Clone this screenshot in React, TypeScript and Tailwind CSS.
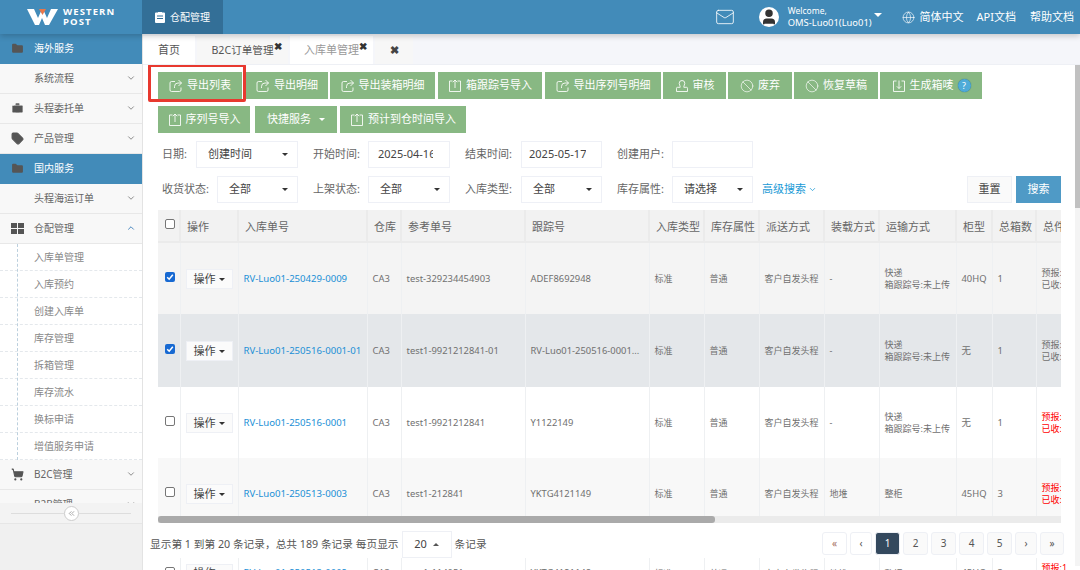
import React from "react";
import { ChevronDown, ChevronUp, Folder, Briefcase, Tag, ShoppingCart, ChevronsLeft, Ban, Mail, Globe, User } from "lucide-react";

const font = { fontFamily: '"Noto Sans","Noto Sans CJK SC",sans-serif' };

function SideHead({ icon, label, blue, active, open, arrow = true }: { icon?: React.ReactNode; label: string; blue?: boolean; active?: boolean; open?: boolean; arrow?: boolean }) {
  return (
    <div className={`flex h-[30px] items-center border-b pb-[1px] ${blue ? "bg-[#428bb9] border-[#428bb9] text-white" : "bg-[#f8f8f8] border-[#e8e8e8] text-[#666]"} ${active ? "text-[#2a72b5]" : ""}`}>
      <span className="flex w-[34px] justify-center text-[#555]">{icon}</span>
      <span className="text-[10px] leading-none">{label}</span>
      {arrow && !blue && (
        <span className="ml-auto mr-[6px]">
          {open ? <ChevronUp size={10} className="text-[#2a72b5]" /> : <ChevronDown size={10} className="text-[#777]" />}
        </span>
      )}
    </div>
  );
}

function SubItem({ label }: { label: string }) {
  return (
    <div className="flex h-[27px] items-center border-b border-dashed border-[#e4e8ec] pl-[34px] text-[10px] text-[#888]">
      {label}
    </div>
  );
}

function GridIcon() {
  return (
    <svg width="13" height="11" viewBox="0 0 13 11" fill="#555">
      <rect x="0" y="0" width="6" height="5" />
      <rect x="7" y="0" width="6" height="5" />
      <rect x="0" y="6" width="6" height="5" />
      <rect x="7" y="6" width="6" height="5" />
    </svg>
  );
}

function Sidebar() {
  return (
    <aside className="relative flex w-[143px] shrink-0 flex-col overflow-hidden border-r border-[#e3e3e3] bg-[#f0f0f0]">
      <div className="h-[469px] shrink-0 overflow-hidden bg-white">
        <SideHead blue label="海外服务" icon={<Folder size={13} fill="#555" strokeWidth={0} />} />
        <SideHead label="系统流程" />
        <SideHead label="头程委托单" icon={<Briefcase size={13} fill="#555" color="#f8f8f8" strokeWidth={1} />} />
        <SideHead label="产品管理" icon={<Tag size={13} fill="#555" color="#555" />} />
        <SideHead blue label="国内服务" icon={<Folder size={13} fill="#555" strokeWidth={0} />} />
        <SideHead label="头程海运订单" />
        <SideHead active open label="仓配管理" icon={<GridIcon />} />
        <div className="relative">
          <div className="absolute bottom-0 left-[17px] top-0 border-l border-dashed border-[#bcd0de]" />
          {["入库单管理", "入库预约", "创建入库单", "库存管理", "拆箱管理", "库存流水", "换标申请", "增值服务申请"].map((s) => (
            <SubItem key={s} label={s} />
          ))}
        </div>
        <SideHead label="B2C管理" icon={<ShoppingCart size={13} fill="#555" color="#555" />} />
        <SideHead label="B2B管理" />
      </div>
      <div className="flex h-[20px] shrink-0 items-center bg-[#f3f3f3] px-[11px]">
        <div className="h-px flex-1 bg-[#ddd]" />
        <span className="flex h-[15px] w-[15px] items-center justify-center rounded-full border border-[#ccc] bg-white text-[#888]">
          <ChevronsLeft size={9} />
        </span>
        <div className="h-px flex-1 bg-[#ddd]" />
      </div>
      <div className="flex-1 border-t border-[#e6e6e6] bg-[#f0f0f0]" />
    </aside>
  );
}

function Logo() {
  return (
    <div className="flex w-[142px] shrink-0 items-center pl-[27px]">
      <svg width="31" height="18" viewBox="0 0 31 18">
        <path d="M0 1h7l4 9 4-9h1l4 9 4-9h7l-9 16h-4l-3-7-3 7h-4z" fill="#fff" />
        <path d="M12 1h7l-3.5 6z" fill="#e8774a" />
      </svg>
      <div className="ml-[5px] text-[9.5px] font-bold tracking-[1.1px] text-white" style={{ fontFamily: '"Open Sans",sans-serif' }}>
        <div className="h-[10px] leading-[10px]">WESTERN</div>
        <div className="h-[10px] leading-[10px]">POST</div>
      </div>
    </div>
  );
}

function Header() {
  return (
    <header className="relative z-10 flex h-[34px] shrink-0 items-center bg-[#428bb9] text-white shadow-[0_2px_6px_rgba(0,0,0,0.2)]">
      <Logo />
      <div className="flex h-full w-[81px] items-center justify-center gap-[5px] bg-[#336f97] text-[10px]">
        <svg width="10" height="12" viewBox="0 0 10 12">
          <path d="M1 1.5h2V1h4v.5h2a1 1 0 0 1 1 1V11a1 1 0 0 1-1 1H1a1 1 0 0 1-1-1V2.5a1 1 0 0 1 1-1z" fill="#fff" />
          <path d="M2 5h6M2 7.5h6" stroke="#336f97" strokeWidth="1" />
        </svg>
        仓配管理
      </div>
      <div className="ml-auto flex items-center text-[11px]">
        <Mail size={20} strokeWidth={1} className="mr-[24px]" />
        <span className="mr-[9px] flex h-[20px] w-[20px] items-center justify-center overflow-hidden rounded-full bg-white">
          <User size={18} fill="#333" color="#333" />
        </span>
        <div className="mr-[2px] text-[9.4px] leading-[12px]">
          <div className="text-[8.5px]">Welcome,</div>
          <div>OMS-Luo01(Luo01)</div>
        </div>
        <span className="mb-[4px] mr-[20px] h-0 w-0 border-x-[4px] border-t-[4px] border-x-transparent border-t-white" />
        <Globe size={13} strokeWidth={1.2} className="mr-[5px]" />
        <span className="mr-[13px]">简体中文</span>
        <span className="mr-[14px]">API文档</span>
        <span className="mr-[6px]">帮助文档</span>
      </div>
    </header>
  );
}

function Tabs() {
  const X = <span className="absolute right-[6px] top-[5px] text-[10px] font-bold leading-none text-[#333]">✖</span>;
  return (
    <div className="flex h-[31px] shrink-0 items-end gap-[2px] border-b border-[#eef0f5] bg-[#f5f6fa] text-[11px] text-[#555]">
      <div className="flex h-[28px] w-[52px] items-center justify-center bg-white pt-[1px]">首页</div>
      <div className="relative flex h-[28px] w-[91px] items-center justify-center bg-[#f7f7f7] pt-[1px] text-[10.6px]">B2C订单管理{X}</div>
      <div className="relative flex h-[28px] w-[83px] items-center justify-center bg-white pt-[1px] text-[#999]">入库单管理{X}</div>
      <div className="relative flex h-[28px] w-[38px] items-center justify-center bg-[#f7f7f7] pt-[1px] text-[11px] font-bold text-[#444]">✖</div>
    </div>
  );
}

function Btn({ icon, children, w, cls = "" }: { icon?: React.ReactNode; children: React.ReactNode; w: number; cls?: string }) {
  return (
    <button style={{ width: w }} className={`flex h-[27px] shrink-0 items-center justify-center gap-[4px] bg-[#88b883] text-[11px] text-white ${cls}`}>
      {icon}
      {children}
    </button>
  );
}

const svgProps = { width: 14, height: 14, viewBox: "0 0 14 14", fill: "none", stroke: "rgba(255,255,255,0.85)", strokeWidth: 1 };

function ShareIc() {
  return (
    <svg {...svgProps}>
      <path d="M12 8.5V11a1.5 1.5 0 0 1-1.5 1.5h-8A1.5 1.5 0 0 1 1 11V4a1.5 1.5 0 0 1 1.5-1.5H6" />
      <path d="M9.5 1 12.5 4 9.5 7" />
      <path d="M12.5 4H9a3.5 3.5 0 0 0-3.5 3.5V9" />
    </svg>
  );
}
function UploadIc() {
  return (
    <svg {...svgProps}>
      <path d="M4.5 2H1.5v10.5h11V2h-3" />
      <path d="M7 1v8M4.8 3.2 7 1l2.2 2.2" />
    </svg>
  );
}
function DownloadIc() {
  return (
    <svg {...svgProps}>
      <path d="M4.5 2H1.5v10.5h11V2h-3" />
      <path d="M7 1.5v8M4.8 7.3 7 9.5l2.2-2.2" />
    </svg>
  );
}
function StampIc() {
  return (
    <svg {...svgProps}>
      <path d="M7 1.5a2.8 2.8 0 0 0-2.8 2.8c0 1.5 1 2 1 3.5v.5H2.5a1 1 0 0 0-1 1V12.5h11V9.3a1 1 0 0 0-1-1H8.8v-.5c0-1.5 1-2 1-3.5A2.8 2.8 0 0 0 7 1.5z" />
    </svg>
  );
}
const banIc = <Ban size={14} strokeWidth={1.25} color="rgba(255,255,255,0.9)" />;

function Toolbar() {
  return (
    <div className="relative">
      <div className="flex h-[27px]">
        <Btn w={84} icon={<ShareIc />}>导出列表</Btn>
        <Btn w={82} cls="ml-[4px]" icon={<ShareIc />}>导出明细</Btn>
        <Btn w={105} cls="ml-[2px]" icon={<ShareIc />}>导出装箱明细</Btn>
        <Btn w={104} cls="ml-[3px]" icon={<UploadIc />}>箱跟踪号导入</Btn>
        <Btn w={116} cls="ml-[3px]" icon={<ShareIc />}>导出序列号明细</Btn>
        <Btn w={63} cls="ml-[2px]" icon={<StampIc />}>审核</Btn>
        <Btn w={64} cls="ml-[2px]" icon={banIc}>废弃</Btn>
        <Btn w={84} cls="ml-[2px]" icon={banIc}>恢复草稿</Btn>
        <Btn w={102} cls="ml-[2px]" icon={<DownloadIc />}>
          生成箱唛
          <span className="flex h-[13px] w-[13px] items-center justify-center rounded-full bg-[#4fabd8] text-[9px] leading-none text-white shadow-[0_0_1px_#1b5f86]">?</span>
        </Btn>
      </div>
      <div className="mt-[7px] flex h-[27px]">
        <Btn w={92} icon={<UploadIc />}>序列号导入</Btn>
        <Btn w={82} cls="ml-[5px]">
          快捷服务
          <span className="ml-[4px] h-0 w-0 border-x-[3px] border-t-[3px] border-x-transparent border-t-white" />
        </Btn>
        <Btn w={126} cls="ml-[3px]" icon={<UploadIc />}>预计到仓时间导入</Btn>
      </div>
      <div className="pointer-events-none absolute left-[-10px] top-[-8px] h-[38px] w-[98px] rounded-[2px] border-[3px] border-[#e8392f]" />
    </div>
  );
}

function Field({ label, w, lw, pl, value, select, inner = "pl-[11px] pr-[9px]" }: { label: string; w: number; lw: number; pl: number; value?: string; select?: boolean; inner?: string }) {
  return (
    <div className="flex items-center">
      <span style={{ width: lw, paddingLeft: pl }} className="shrink-0 whitespace-nowrap text-[11px] text-[#666]">{label}</span>
      <div style={{ width: w }} className={`flex h-[27px] items-center justify-between border border-[#eef0f6] bg-white text-[11px] text-[#444] ${inner}`}>
        <span className="overflow-hidden whitespace-nowrap">{value}</span>
        {select && <span className="h-0 w-0 shrink-0 border-x-[3px] border-t-[3px] border-x-transparent border-t-[#333]" />}
      </div>
    </div>
  );
}

function Filters() {
  return (
    <div className="mt-[8px] text-[11px]">
      <div className="flex h-[27px]">
        <Field label="日期:" lw={38} pl={4} w={102} value="创建时间" select />
        <Field label="开始时间:" lw={70} pl={15} w={82} value="2025-04-16" inner="pl-[9px] pr-[16px]" />
        <Field label="结束时间:" lw={71} pl={15} w={81} value="2025-05-17" inner="pl-[7px] pr-[12px]" />
        <Field label="创建用户:" lw={70} pl={15} w={81} />
      </div>
      <div className="mt-[8px] flex h-[27px] items-center">
        <Field label="收货状态:" lw={59} pl={4} w={81} value="全部" select />
        <Field label="上架状态:" lw={70} pl={15} w={82} value="全部" select />
        <Field label="入库类型:" lw={71} pl={15} w={81} value="全部" select />
        <Field label="库存属性:" lw={70} pl={15} w={81} value="请选择" select />
        <span className="ml-[9px] flex items-center gap-[2px] text-[11px] text-[#1a9ad6]">高级搜索<ChevronDown size={9} /></span>
        <button className="ml-auto h-[27px] w-[45px] border border-[#eef0f5] bg-[#fafafa] text-[11px] text-[#444]">重置</button>
        <button className="ml-[4px] h-[27px] w-[45px] bg-[#4f9ac6] text-[11px] text-white">搜索</button>
      </div>
    </div>
  );
}

const cols = [22, 58, 129, 34, 124, 124, 55, 55, 65, 55, 77, 36, 44, 46];
const heads = ["", "操作", "入库单号", "仓库", "参考单号", "跟踪号", "入库类型", "库存属性", "派送方式", "装载方式", "运输方式", "柜型", "总箱数", "总件数"];
const tableWidth = cols.reduce((a, b) => a + b, 0);

type Row = { checked: boolean; no: string; ref: string; track: string; load: string; ship: string[]; box: string; count: string; red?: boolean; bg: string; h: number };
const rows: Row[] = [
  { checked: true, no: "RV-Luo01-250429-0009", ref: "test-329234454903", track: "ADEF8692948", load: "-", ship: ["快递", "箱跟踪号:未上传"], box: "40HQ", count: "1", bg: "bg-[#f4f4f4]", h: 72 },
  { checked: true, no: "RV-Luo01-250516-0001-01", ref: "test1-9921212841-01", track: "RV-Luo01-250516-0001...", load: "-", ship: ["快递", "箱跟踪号:未上传"], box: "无", count: "1", bg: "bg-[#e4e7ea]", h: 73 },
  { checked: false, no: "RV-Luo01-250516-0001", ref: "test1-9921212841", track: "Y1122149", load: "-", ship: ["快递", "箱跟踪号:未上传"], box: "无", count: "1", red: true, bg: "bg-white", h: 71 },
  { checked: false, no: "RV-Luo01-250513-0003", ref: "test1-212841", track: "YKTG4121149", load: "地堆", ship: ["整柜"], box: "45HQ", count: "3", red: true, bg: "bg-[#f8f8f8]", h: 71 },
  { checked: false, no: "RV-Luo01-250513-0002", ref: "test1-114051", track: "YKTG4121148", load: "地堆", ship: ["整柜"], box: "45HQ", count: "3", red: true, bg: "bg-white", h: 71 },
];

function CheckBox({ on }: { on: boolean }) {
  return on ? (
    <span className="ml-[7px] flex h-[10px] w-[10px] items-center justify-center rounded-[2px] bg-[#1769d2]">
      <svg width="8" height="8" viewBox="0 0 8 8"><path d="M1.2 4.2 3.2 6.2 6.8 1.8" stroke="#fff" strokeWidth="1.5" fill="none" /></svg>
    </span>
  ) : (
    <span className="ml-[7px] block h-[10px] w-[10px] rounded-[2px] border border-[#767676] bg-white" />
  );
}

const td = "border-r border-[#eef0f2] px-[5px] pt-[1px] align-middle whitespace-nowrap overflow-hidden";

function Cells({ r }: { r: Row }) {
  return (
    <>
      <td className={`${td} !px-0`}><span className="mb-[4px] block"><CheckBox on={r.checked} /></span></td>
      <td className={td}>
        <span className="flex h-[20px] w-[47px] items-center justify-center gap-[3px] border border-[#eef0f5] bg-[#fbfbfb] text-[11px] text-[#444]">
          操作<span className="h-0 w-0 border-x-[3px] border-t-[3px] border-x-transparent border-t-[#333]" />
        </span>
      </td>
      <td className={`${td} text-[9.6px] text-[#1a8fd6]`}>{r.no}</td>
      <td className={`${td} text-[9.4px]`}>CA3</td>
      <td className={`${td} text-[9.4px]`}>{r.ref}</td>
      <td className={`${td} text-[9.4px]`}>{r.track}</td>
      <td className={td}>标准</td>
      <td className={td}>普通</td>
      <td className={td}>客户自发头程</td>
      <td className={td}>{r.load}</td>
      <td className={`${td} leading-[12px]`}>{r.ship.map((s) => <div key={s}>{s}</div>)}</td>
      <td className={`${td} text-[9.4px]`}>{r.box}</td>
      <td className={`${td} text-[9.4px]`}>{r.count}</td>
      <td className={`${td} leading-[12px] ${r.red ? "text-[#f00]" : ""}`}><div>预报:1</div><div>已收:0</div></td>
    </>
  );
}

function Colgroup() {
  return <colgroup>{cols.map((c, i) => <col key={i} style={{ width: c }} />)}</colgroup>;
}

function DataTable() {
  return (
    <div className="relative mt-[7px] h-[313px] overflow-hidden">
      <table className="table-fixed border-collapse" style={{ width: tableWidth }}>
        <Colgroup />
        <thead>
          <tr className="h-[32px] bg-[#f2f2f2] text-[11px] text-[#666]">
            {heads.map((h, i) => (
              <th key={i} className={`h-[32px] overflow-hidden whitespace-nowrap border-b-2 border-r-2 border-[#ebebeb] py-0 text-left font-normal leading-none ${i === 0 ? "px-0" : "px-[6px] pt-[2px]"}`}>
                {i === 0 ? <span className="mb-[4px] block"><CheckBox on={false} /></span> : h}
              </th>
            ))}
          </tr>
        </thead>
        <tbody className="text-[9px] text-[#707070]">
          {rows.slice(0, 4).map((r) => (
            <tr key={r.no} style={{ height: r.h }} className={r.bg}>
              <Cells r={r} />
            </tr>
          ))}
        </tbody>
      </table>
      <div className="absolute bottom-0 left-0 right-0 h-[7px] bg-[#ebebeb]">
        <div className="h-full w-[557px] rounded-[3px] bg-[#aaaaaa]" />
      </div>
    </div>
  );
}

function Pager() {
  const base = "flex h-[23px] items-center justify-center rounded-[3px] border border-[#eef0f5] text-[10px] text-[#555]";
  return (
    <div className="ml-[-8px] mt-[8px] flex h-[27px] items-center text-[10.7px] text-[#555]">
      <span>显示第 1 到第 20 条记录，总共 189 条记录 每页显示</span>
      <span className="mx-[3px] flex h-[27px] w-[50px] items-center justify-center gap-[6px] border border-[#eef0f5] text-[11px] text-[#444]">
        20<span className="h-0 w-0 border-x-[3px] border-b-[3px] border-x-transparent border-b-[#555]" />
      </span>
      <span>条记录</span>
      <div className="mb-[2px] ml-auto mr-[-3px] flex gap-[3px]">
        <span className={`${base} w-[25px] border-[#e6e6e6] text-[#a5705f]`}>«</span>
        <span className={`${base} w-[22px]`}>‹</span>
        <span className={`${base} w-[25px] border-[#34495e] bg-[#34495e] text-white`}>1</span>
        {["2", "3", "4", "5"].map((n) => <span key={n} className={`${base} w-[25px] bg-[#fafafa]`}>{n}</span>)}
        <span className={`${base} w-[22px] bg-[#fafafa]`}>›</span>
        <span className={`${base} w-[24px] bg-[#fafafa]`}>»</span>
      </div>
    </div>
  );
}

function HiddenRow() {
  return (
    <table className="table-fixed border-collapse" style={{ width: tableWidth }}>
      <Colgroup />
      <tbody className="text-[9px] text-[#707070]">
        <tr className="h-[30px] bg-white"><Cells r={rows[4]} /></tr>
      </tbody>
    </table>
  );
}

export default function App() {
  return (
    <div style={font} className="flex h-[570px] w-[1080px] flex-col overflow-hidden bg-white">
      <Header />
      <div className="flex min-h-0 flex-1">
        <Sidebar />
        <main className="flex min-w-0 flex-1 flex-col">
          <Tabs />
          <div className="flex min-h-0 flex-1 overflow-hidden">
            <div className="min-w-0 flex-1 overflow-hidden pl-[15px] pr-[14px] pt-[7px]">
              <Toolbar />
              <Filters />
              <DataTable />
              <Pager />
              <HiddenRow />
            </div>
            <div className="h-[501px] w-[5px] shrink-0 bg-[#f4f4f4]">
              <div className="h-[143px] w-full bg-[#c1c1c1]" />
            </div>
          </div>
        </main>
      </div>
    </div>
  );
}
